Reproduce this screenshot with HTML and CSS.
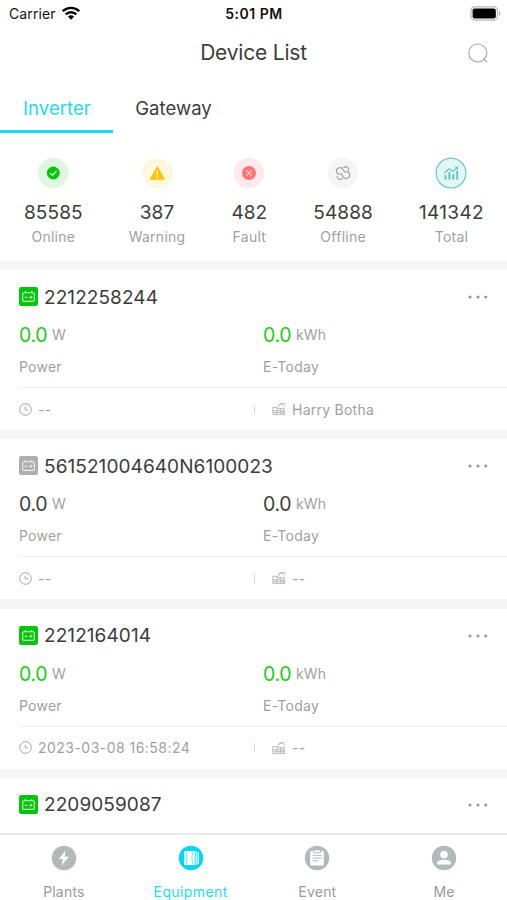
FILE: index.html
```html
<!DOCTYPE html>
<html lang="en">
<head>
<meta charset="utf-8">
<meta name="viewport" content="width=device-width, initial-scale=1">
<title>Device List</title>
<link rel="stylesheet" href="styles.css">
</head>
<body>
<svg class="defs" aria-hidden="true">
  <symbol id="inverter" viewBox="0 0 19 19">
    <rect width="19" height="19" rx="2.2" fill="currentColor"/>
    <g fill="none" stroke="#fff" stroke-opacity=".8" stroke-width="1.1">
      <rect x="3.7" y="5.8" width="11.6" height="8.6" rx="1.4"/>
      <path d="M6.3 6V4.1M12.7 6V4.1M5.6 10.3h2.9M10.3 10.3h3.2M11.9 8.8v3"/>
    </g>
  </symbol>
  <symbol id="clock" viewBox="0 0 13 13">
    <g fill="none" stroke="#a4a4a4" stroke-width="1"><circle cx="6.5" cy="6.5" r="5.8"/><path d="M6.2 3.8v3.1h3"/></g>
  </symbol>
  <symbol id="plant" viewBox="0 0 14 14">
    <g fill="none" stroke="#acacac" stroke-width=".8">
      <path d="M.8 12.6V5.4h4.4v3.4M.8 12.6h12.2M.8 8.8h11.4L13 12.6M1.2 10.7h11.4M4.6 8.8v3.8M8.4 6.5v6.1M11 8.8v3.8M12.2 8.8V5.6M5.2 6.6h7"/>
      <path d="M6.6 5.2a2.7 2.7 0 0 1 5.2-1.6M7 3.2l4-1.8M11.2 2l1.8-.8M12.2 4.2l1.4-.6"/>
    </g>
  </symbol>
  <symbol id="more" viewBox="0 0 20 4">
    <g fill="#999"><circle cx="2" cy="2" r="1.6"/><circle cx="10" cy="2" r="1.6"/><circle cx="17.7" cy="2" r="1.6"/></g>
  </symbol>
</svg>

<div class="screen">
  <div class="status">
    <div class="carrier"><span>Carrier</span>
      <svg width="18" height="14" viewBox="0 0 18 14"><g fill="none" stroke="#000" stroke-width="2.4"><path d="M.8 5.2a11.7 11.7 0 0 1 16.4 0"/><path d="M3.7 8.4a7.5 7.5 0 0 1 10.6 0"/></g><path d="M9 13.8 5.9 10.6a4.5 4.5 0 0 1 6.2 0z"/></svg>
    </div>
    <span class="time">5:01 PM</span>
    <svg class="battery" width="31" height="15" viewBox="0 0 31 15"><rect x=".9" y=".9" width="26.6" height="13.2" rx="3.8" fill="#fff" stroke="#b9b9b9" stroke-width="1.2"/><rect x="2.6" y="2.6" width="23.2" height="9.8" rx="2"/><path d="M29 5.2c1.8.7 1.8 3.9 0 4.6z" fill="#b0b0b0"/></svg>
  </div>

  <header class="header">
    <h1>Device List</h1>
    <svg class="search" width="22" height="22" viewBox="0 0 22 22"><g fill="none" stroke="#aaa" stroke-width="1.2"><circle cx="10.8" cy="11" r="9"/><path d="m16.2 16.6 3.8 3.6"/></g></svg>
  </header>

  <nav class="tabs">
    <a class="tab active">Inverter</a>
    <a class="tab">Gateway</a>
  </nav>

  <section class="stats">
    <div class="stat">
      <svg width="32" height="32" viewBox="0 0 32 32"><circle cx="16.3" cy="16" r="15.3" fill="#dff7e1"/><circle cx="16.3" cy="16" r="6.4" fill="#06c40b"/><path d="m13.1 16.1 2.3 2.2 4.1-4.2" fill="none" stroke="#dff7e1" stroke-width="1.3"/></svg>
      <b>85585</b><span>Online</span>
    </div>
    <div class="stat">
      <svg width="32" height="32" viewBox="0 0 32 32"><circle cx="16.3" cy="16" r="15.3" fill="#fff8dd"/><path d="M16.3 10.1 23 22H9.6z" fill="#fdc40a" stroke="#fdc40a" stroke-width="1.4" stroke-linejoin="round"/><path d="M16.3 13.2v4.8M16.3 19.4v1.6" stroke="#fff8dd" stroke-width="1.3"/></svg>
      <b>387</b><span>Warning</span>
    </div>
    <div class="stat">
      <svg width="32" height="32" viewBox="0 0 32 32"><circle cx="16" cy="16" r="15.3" fill="#ffe9ea"/><circle cx="16" cy="16" r="7" fill="#fb7478"/><path d="m13.2 13.2 5.6 5.6m0-5.6-5.6 5.6" stroke="#ffd4d4" stroke-width="1.1"/></svg>
      <b>482</b><span>Fault</span>
    </div>
    <div class="stat">
      <svg width="32" height="32" viewBox="0 0 32 32"><circle cx="16" cy="16" r="15.3" fill="#f5f5f5"/><g fill="none" stroke="#a9a9a9" stroke-width="1.3"><path d="M13.4 17.4h-1.2a3.3 3.3 0 0 1-1-6.2 3.3 3.3 0 0 1 4.7 1.1l2.2 3.3M18.5 14.6h1.2a3.3 3.3 0 0 1 1.2 6.2 3.3 3.3 0 0 1-4.8-1.1L13.8 16M16.2 10.7c1.2-1.4 4-1.2 5 .2.8 1 .7 2-.1 2.9M15.7 21.3c-1.2 1.4-4 1.2-5-.2-.5-.7-.6-1.4-.3-2.2"/></g></svg>
      <b>54888</b><span>Offline</span>
    </div>
    <div class="stat">
      <svg width="32" height="32" viewBox="0 0 32 32"><circle cx="16" cy="16" r="14.9" fill="#e3f6f6" stroke="#6cc9c9" stroke-width="1.2"/><g fill="none" stroke="#5cc4c4"><path d="M10.5 22.6v-4.4M14.4 22.6v-7.4M18.3 22.6v-5.4M22.2 22.6v-8.8" stroke-width="1.9"/><path d="m9.4 16 4.8-4.2 3.6 2.8 4.6-4.3M20 10.2h2.6v2.5" stroke-width="1.1"/></g></svg>
      <b class="total">141342</b><span>Total</span>
    </div>
  </section>

  <main class="list">
    <article class="card">
      <div class="title"><svg class="dev on"><use href="#inverter"/></svg><h2>2212258244</h2><svg class="more"><use href="#more"/></svg></div>
      <div class="metrics on">
        <div><p><b>0.0</b><i>W</i></p><span>Power</span></div>
        <div><p><b>0.0</b><i>kWh</i></p><span>E-Today</span></div>
      </div>
      <div class="foot"><div><svg class="clock"><use href="#clock"/></svg><span>--</span></div><div class="owner"><svg class="plant"><use href="#plant"/></svg><span>Harry Botha</span></div></div>
    </article>
    <article class="card">
      <div class="title"><svg class="dev"><use href="#inverter"/></svg><h2>561521004640N6100023</h2><svg class="more"><use href="#more"/></svg></div>
      <div class="metrics">
        <div><p><b>0.0</b><i>W</i></p><span>Power</span></div>
        <div><p><b>0.0</b><i>kWh</i></p><span>E-Today</span></div>
      </div>
      <div class="foot"><div><svg class="clock"><use href="#clock"/></svg><span>--</span></div><div class="owner"><svg class="plant"><use href="#plant"/></svg><span>--</span></div></div>
    </article>
    <article class="card">
      <div class="title"><svg class="dev on"><use href="#inverter"/></svg><h2>2212164014</h2><svg class="more"><use href="#more"/></svg></div>
      <div class="metrics on">
        <div><p><b>0.0</b><i>W</i></p><span>Power</span></div>
        <div><p><b>0.0</b><i>kWh</i></p><span>E-Today</span></div>
      </div>
      <div class="foot"><div><svg class="clock"><use href="#clock"/></svg><span class="date">2023-03-08 16:58:24</span></div><div class="owner"><svg class="plant"><use href="#plant"/></svg><span>--</span></div></div>
    </article>
    <article class="card">
      <div class="title"><svg class="dev on"><use href="#inverter"/></svg><h2>2209059087</h2><svg class="more"><use href="#more"/></svg></div>
    </article>
  </main>

  <nav class="bar">
    <a><svg width="26" height="26" viewBox="0 0 26 26"><circle cx="13" cy="13" r="12.2" fill="#b1baba"/><path d="M14.6 5.6 7.6 14h4.3l-1.4 6.6 7.5-8.8h-4.4z" fill="#fff"/></svg><span>Plants</span></a>
    <a class="active"><svg width="26" height="26" viewBox="0 0 26 26"><circle cx="13" cy="13" r="12.2" fill="#06d5f7"/><rect x="6.3" y="6.2" width="10.4" height="13.8" fill="#fff"/><path d="M8.4 7.2q1.4 5.9 0 11.8M14.6 7.2q-1.4 5.9 0 11.8" fill="none" stroke="#5fe2f8" stroke-width=".9"/><path d="M18.2 6.2V20M20.2 7.2V19" stroke="#fff" stroke-width="1.2"/></svg><span>Equipment</span></a>
    <a><svg width="26" height="26" viewBox="0 0 26 26"><circle cx="13" cy="13" r="12.2" fill="#b1baba"/><rect x="6.2" y="6" width="13.6" height="14.6" rx="1" fill="#fff"/><path d="M9.7 4.9h6.8v2.9H9.7z" fill="#fff" stroke="#b1baba" stroke-width=".9"/><path d="M8.4 10.4h9.2M8.4 13.1h9.2M8.4 15.8H14" stroke="#b1baba" stroke-width="1"/></svg><span>Event</span></a>
    <a><svg width="26" height="26" viewBox="0 0 26 26"><circle cx="13" cy="13" r="12.2" fill="#b1baba"/><circle cx="13" cy="9.6" r="3.8" fill="#fff"/><path d="M6 19.6v-1.2c0-2.4 2.8-3.7 7-3.7s7 1.3 7 3.7v1.2z" fill="#fff"/></svg><span>Me</span></a>
  </nav>
</div>
</body>
</html>
```
FILE: styles.css
```css
* { box-sizing: border-box; margin: 0; padding: 0; }
body { font-family: Inter, "Liberation Sans", sans-serif; color: #3c3c3c; background: #fff; }
h1, h2, b { font-weight: 400; }
i { font-style: normal; }
svg { display: block; flex: none; }
.defs { width: 0; height: 0; position: absolute; }
.screen { height: 900px; display: flex; flex-direction: column; overflow: hidden; }

.status { height: 28px; flex: none; display: grid; grid-template-columns: 1fr auto 1fr; align-items: center; padding: 0 6px 0 9px; color: #111; font-size: 14px; }
.carrier { display: flex; align-items: center; gap: 6px; letter-spacing: .12px; }
.carrier span { margin-top: -1px; }
.carrier svg { margin-top: -3px; }
.time { font-weight: 600; font-size: 14px; letter-spacing: .5px; margin: -1px 2px 0 0; }
.battery { justify-self: end; margin-top: -2px; }

.header { height: 50px; flex: none; display: grid; grid-template-columns: 1fr auto 1fr; align-items: center; padding: 0 18px; }
.header h1 { grid-column: 2; font-size: 21px; letter-spacing: -.2px; margin-top: -2px; }
.search { justify-self: end; }

.tabs { height: 55px; flex: none; display: flex; }
.tab { width: 113px; display: flex; justify-content: center; padding-top: 17px; font-size: 18.5px; letter-spacing: .06px; line-height: 26px; border-bottom: 3px solid transparent; }
.tab + .tab { width: 121px; }
.tab.active { color: #1fd8f6; border-color: #1fd8f6; padding-left: 1px; }

.stats { height: 128px; flex: none; display: flex; justify-content: space-around; padding: 23.5px 0 0 1px; }
.stat { display: flex; flex-direction: column; align-items: center; }
.stat b { font-size: 19px; line-height: 24px; margin-top: 12.5px; letter-spacing: .1px; }
.stat .total { letter-spacing: .35px; }
.stat span { font-size: 14px; line-height: 20px; margin-top: 2px; letter-spacing: .25px; color: #a0a0a0; }

.list { flex: 1; min-height: 0; overflow: hidden; display: flex; flex-direction: column; gap: 9.3px; padding-top: 9px; background: #f4f6f6; }
.card { height: 160px; flex: none; background: #fff; padding-left: 19px; }
.title { height: 46px; display: flex; align-items: center; padding: 8px 19px 0 0; }
.dev { width: 19px; height: 19px; color: #aeaeae; margin: -1px 6px 0 0; }
.dev.on { color: #06c40b; }
.title h2 { font-size: 19px; line-height: 24px; letter-spacing: .08px; padding-top: 1px; }
.more { width: 20px; height: 4px; margin-left: auto; }
.metrics { height: 72px; display: grid; grid-template-columns: 244px 1fr; padding-top: 7px; border-bottom: 1px solid #efefef; }
.metrics p { display: flex; align-items: center; gap: 5px; height: 24px; }
.metrics b { font-size: 19.5px; letter-spacing: -.4px; line-height: 24px; }
.metrics.on b { color: #1cc920; }
.metrics i, .metrics span, .foot { font-size: 14px; color: #a0a0a0; letter-spacing: .25px; }
.metrics i { line-height: 24px; letter-spacing: .1px; }
.metrics span { display: block; line-height: 20px; margin-top: 10px; }
.foot { height: 42px; display: grid; grid-template-columns: 235px 1fr; align-items: center; }
.foot > div { display: flex; align-items: center; gap: 6px; }
.foot .date { letter-spacing: .47px; }
.clock { width: 13px; height: 13px; }
.plant { width: 14px; height: 14px; }
.owner::before { content: ""; width: 1px; height: 9px; background: #dadada; margin-right: 11px; }

.bar { height: 67px; flex: none; display: grid; grid-template-columns: repeat(4, 1fr); border-top: 2px solid #e9eaea; background: #fff; }
.bar a { display: flex; flex-direction: column; align-items: center; padding: 10px 0 0 1px; font-size: 14px; letter-spacing: .2px; color: #999; }
.bar span { line-height: 20px; margin-top: 10.5px; }
.bar .active { color: #1fd8f6; letter-spacing: .4px; }
```
